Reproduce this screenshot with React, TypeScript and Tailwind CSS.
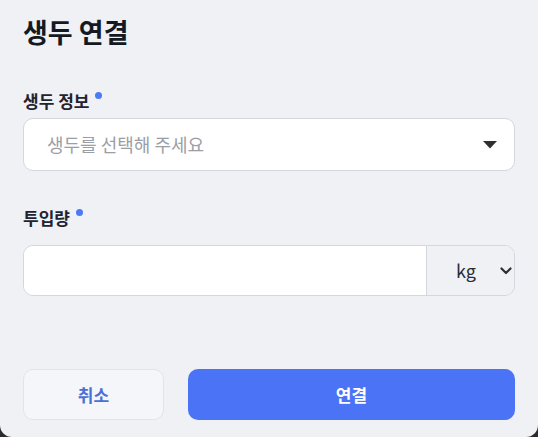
import React, { useState } from 'react';

const Dot: React.FC = () => (
    <span className="ml-[6px] -mt-[12px] inline-block w-[7px] h-[7px] rounded-full bg-[#4a7af5]"></span>
);

export default function App() {
    const [amount, setAmount] = useState('');
    const [unit, setUnit] = useState('kg');

    return (
        <div className="min-h-screen bg-[#2b2b2b]" style={{ fontFamily: '"Noto Sans CJK KR", "Noto Sans", sans-serif' }}>
            <div className="w-[538px] h-[437px] bg-[#eff1f5] rounded-b-[12px] px-[23px] pt-[16px] flex flex-col">
                <h2 className="text-[27px] leading-[32px] font-bold text-[#141a24]">생두 연결</h2>

                {/* 생두 정보 */}
                <div className="mt-[42px] flex items-center text-[17px] leading-[22px] font-bold text-[#1f2430]">
                    생두 정보
                    <Dot />
                </div>
                <button className="mt-[6px] h-[53px] w-full flex items-center justify-between pl-[23px] pr-[17px] bg-white border border-[#d4d7dd] rounded-[10px] text-left">
                    <span className="text-[18px] text-[#9a9ea6]">생두를 선택해 주세요</span>
                    <svg width="14" height="8" viewBox="0 0 14 8">
                        <path d="M0 0 L14 0 L7 7.5 Z" fill="#2f2f2f" />
                    </svg>
                </button>

                {/* 투입량 */}
                <div className="mt-[36px] flex items-center text-[17px] leading-[22px] font-bold text-[#1f2430]">
                    투입량
                    <Dot />
                </div>
                <div className="mt-[16px] h-[51px] flex border border-[#d4d7dd] rounded-[10px] overflow-hidden">
                    <input
                        value={amount}
                        onChange={(e) => setAmount(e.target.value)}
                        className="flex-1 min-w-0 bg-white px-4 text-[18px] outline-none"
                    />
                    <div className="w-[88px] flex items-center border-l border-[#d4d7dd] bg-[#eff1f5] pl-[29px] pr-[2px] justify-between">
                        <span className="text-[18px] text-[#2a2d33]">{unit}</span>
                        <svg width="12" height="8" viewBox="0 0 12 8" onClick={() => setUnit(unit)}>
                            <path d="M1.5 1.5 L6 6 L10.5 1.5" fill="none" stroke="#2f2f2f" strokeWidth="2.2" strokeLinecap="round" strokeLinejoin="round" />
                        </svg>
                    </div>
                </div>

                {/* buttons */}
                <div className="mt-auto mb-[17px] flex gap-[24px]">
                    <button className="w-[141px] h-[51px] rounded-[10px] bg-[#f4f6fa] border border-[#e1e4ea] text-[17px] font-bold text-[#4a6fd6]">
                        취소
                    </button>
                    <button className="flex-1 h-[51px] rounded-[10px] bg-[#4a74f5] text-[17px] font-bold text-white">
                        연결
                    </button>
                </div>
            </div>
        </div>
    );
}
